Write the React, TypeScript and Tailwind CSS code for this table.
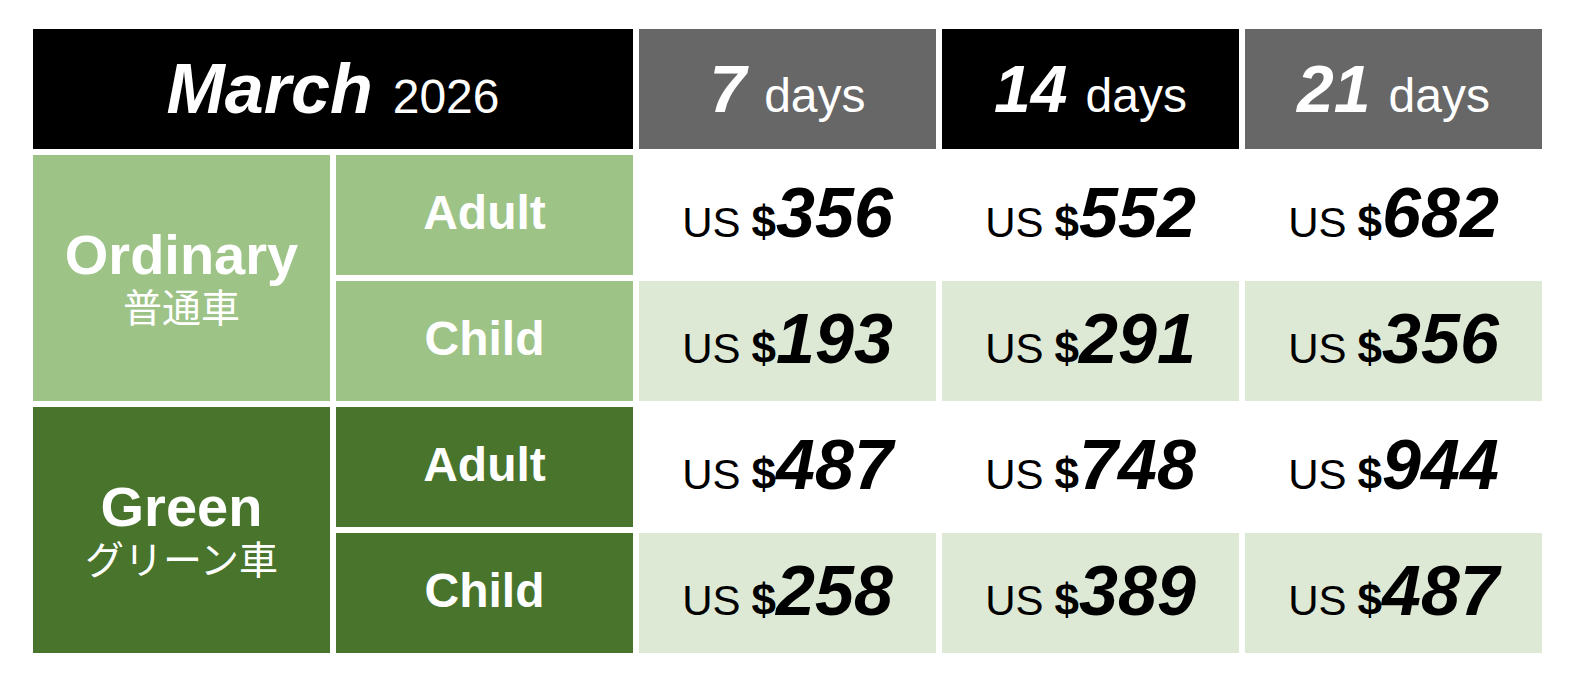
import React from 'react';

const headers = [
  { days: 7, bg: 'bg-[#676767]' },
  { days: 14, bg: 'bg-black' },
  { days: 21, bg: 'bg-[#676767]' },
];

const classes = [
  {
    name: 'Ordinary',
    jp: '普通車',
    bg: 'bg-[#9ec387]',
    rows: [
      { label: 'Adult', prices: [356, 552, 682] },
      { label: 'Child', prices: [193, 291, 356] },
    ],
  },
  {
    name: 'Green',
    jp: 'グリーン車',
    bg: 'bg-[#48742c]',
    rows: [
      { label: 'Adult', prices: [487, 748, 944] },
      { label: 'Child', prices: [258, 389, 487] },
    ],
  },
];

const font = 'font-["Liberation_Sans","Noto_Sans_CJK_JP",Arial,sans-serif]';

function PriceCell({ amount, shaded }: { amount: number; shaded: boolean }) {
  return (
    <div className={`flex items-center justify-center pb-1 text-black ${shaded ? 'bg-[#dde9d5]' : 'bg-white'}`}>
      <div className="flex items-baseline">
        <span className="text-[42px] leading-none">US</span>
        <span className="ml-[11px] text-[44px] font-bold leading-none">$</span>
        <span className="text-[70px] font-bold italic leading-none">{amount}</span>
      </div>
    </div>
  );
}

export default function App() {
  return (
    <div className={`min-h-[686px] w-[1578px] bg-white pl-[33px] pt-[29px] ${font}`}>
      <div className="grid grid-cols-[297px_297px_297px_297px_297px] auto-rows-[120px] gap-[6px]">
        {/* ── Header ── */}
        <div className="col-span-2 flex items-center justify-center bg-black text-white">
          <div className="flex items-baseline">
            <span className="text-[70px] font-bold italic leading-none">March</span>
            <span className="ml-[20px] text-[48px] leading-none">2026</span>
          </div>
        </div>
        {headers.map((h) => (
          <div key={h.days} className={`flex items-center justify-center text-white ${h.bg}`}>
            <div className="flex items-baseline">
              <span className="text-[66px] font-bold italic leading-none">{h.days}</span>
              <span className="ml-[18px] text-[48px] leading-none">days</span>
            </div>
          </div>
        ))}

        {/* ── Body ── */}
        {classes.map((c) => (
          <React.Fragment key={c.name}>
            <div className={`row-span-2 flex flex-col items-center justify-center text-white ${c.bg}`}>
              <div className="text-[56px] font-bold leading-[60px]">{c.name}</div>
              <div className="mt-[2px] text-[39px] leading-[44px]">{c.jp}</div>
            </div>
            {c.rows.map((r, i) => (
              <React.Fragment key={r.label}>
                <div className={`col-start-2 flex items-center justify-center pb-1 text-white ${c.bg}`}>
                  <span className="text-[48px] font-bold leading-none">{r.label}</span>
                </div>
                {r.prices.map((p, j) => (
                  <PriceCell key={j} amount={p} shaded={i === 1} />
                ))}
              </React.Fragment>
            ))}
          </React.Fragment>
        ))}
      </div>
    </div>
  );
}
